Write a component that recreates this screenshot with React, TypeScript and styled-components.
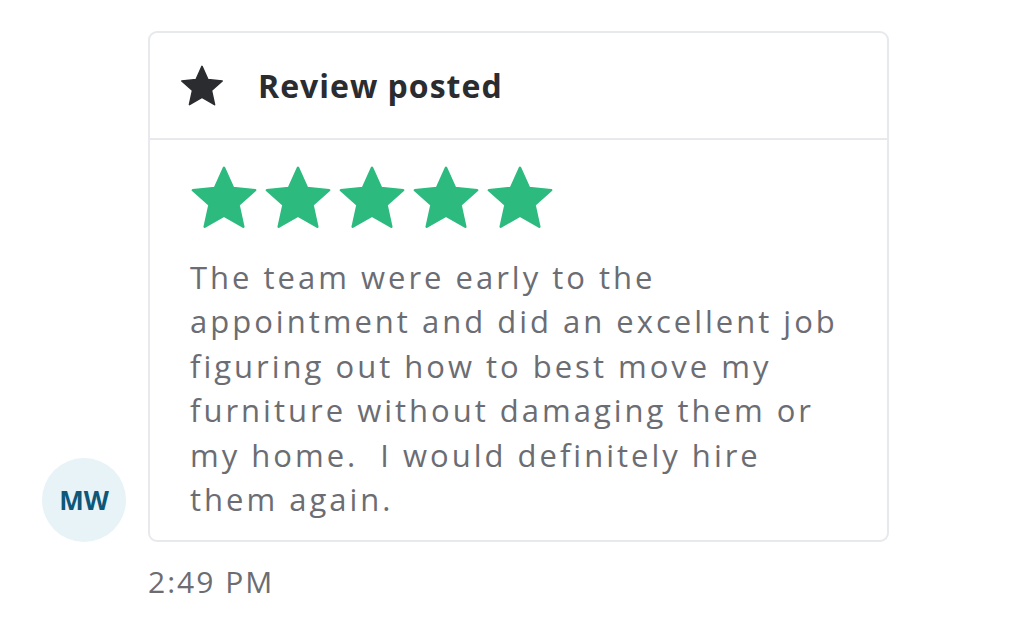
import React from 'react'
import { styled, createGlobalStyle } from 'styled-components'

const GlobalStyle = createGlobalStyle`
    html, body {
        margin: 0;
        padding: 0;
        background: #ffffff;
    }
    body {
        font-family: "Open Sans", Lato, "Liberation Sans", sans-serif;
    }
`

const reviewLines = [
    'The team were early to the',
    'appointment and did an excellent job',
    'figuring out how to best move my',
    'furniture without damaging them or',
    'my home.\u00a0 I would definitely hire',
    'them again.',
]

const Star = ({ size, color }: { size: number; color: string }) => (
    <svg width={size} height={size} viewBox="0 0 24 24" aria-hidden="true">
        <path
            d="M12 2.2l2.95 6.55 7.15.72-5.38 4.78 1.55 7.05L12 17.7l-6.27 3.6 1.55-7.05L1.9 9.47l7.15-.72z"
            fill={color}
            stroke={color}
            strokeWidth="0.8"
            strokeLinejoin="round"
        />
    </svg>
)

const App = () => {
    return (
        <>
            <GlobalStyle />
            <Page>
                <MessageRow>
                    <Avatar>MW</Avatar>
                    <Card>
                        <CardHeader>
                            <Star size={48} color="#2b2c30" />
                            <Title>Review posted</Title>
                        </CardHeader>
                        <CardBody>
                            <Rating>
                                {[0, 1, 2, 3, 4].map((i) => (
                                    <Star key={i} size={74} color="#2dba7e" />
                                ))}
                            </Rating>
                            <ReviewText>
                                {reviewLines.map((line, i) => (
                                    <Line key={i}>{line}</Line>
                                ))}
                            </ReviewText>
                        </CardBody>
                    </Card>
                </MessageRow>
                <Timestamp>2:49 PM</Timestamp>
            </Page>
        </>
    )
}

export default App

const Page = styled.div`
    padding: 31px 0 0 42px;
`

const MessageRow = styled.div`
    display: flex;
    align-items: flex-end;
    gap: 22px;
`

const Avatar = styled.div`
    width: 84px;
    height: 84px;
    flex-shrink: 0;
    border-radius: 50%;
    background: #e8f3f8;
    color: #0d5878;
    font-weight: 700;
    font-size: 26px;
    display: flex;
    align-items: center;
    justify-content: center;
`

const Card = styled.div`
    width: 741px;
    box-sizing: border-box;
    border: 2px solid #e7e9ec;
    border-radius: 9px;
    background: #fff;
`

const CardHeader = styled.div`
    height: 107px;
    box-sizing: border-box;
    border-bottom: 2px solid #e7e9ec;
    display: flex;
    align-items: center;
    padding-left: 28px;
    gap: 32px;
`

const Title = styled.div`
    font-size: 32px;
    font-weight: 700;
    letter-spacing: 1px;
    color: #2b2c30;
`

const CardBody = styled.div`
    padding: 21px 20px 19px 40px;
`

const Rating = styled.div`
    display: flex;
    margin-left: -3px;
`

const ReviewText = styled.div`
    margin-top: 20px;
    font-size: 31px;
    line-height: 44.4px;
    letter-spacing: 3px;
    color: #6b6d73;
`

const Line = styled.div`
    white-space: nowrap;
`

const Timestamp = styled.div`
    margin: 19px 0 0 106px;
    font-size: 30px;
    letter-spacing: 2px;
    color: #6b6d73;
`
